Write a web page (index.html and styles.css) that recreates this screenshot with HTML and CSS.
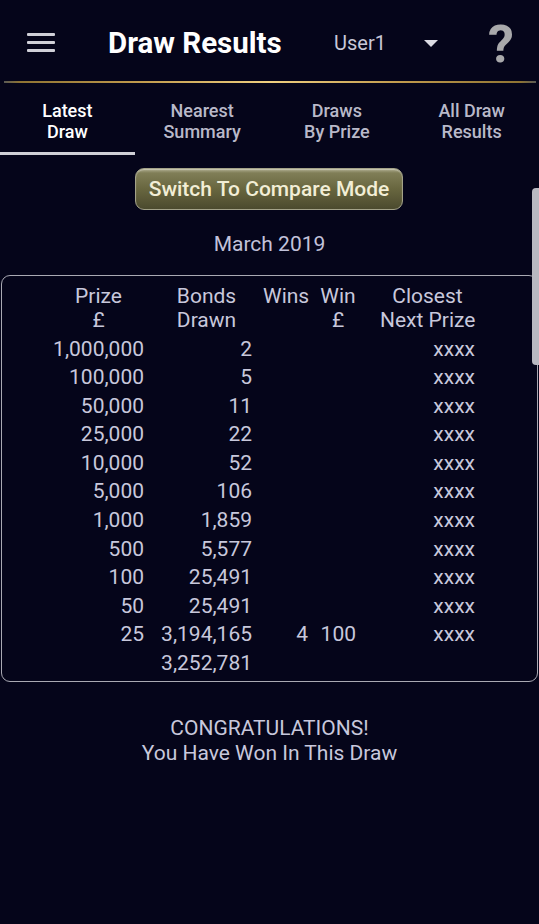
FILE: index.html
```html
<!DOCTYPE html>
<html lang="en">
<head>
<meta charset="utf-8">
<title>Draw Results</title>
<link rel="stylesheet" href="styles.css">
</head>
<body>
<div class="app">
  <header class="topbar">
    <div class="menu" aria-label="Menu">
      <span class="bar"></span><span class="bar"></span><span class="bar"></span>
    </div>
    <h1 class="title">Draw Results</h1>
    <div class="user">User1</div>
    <div class="caret"></div>
    <div class="help">?</div>
  </header>
  <div class="gold-line"></div>

  <nav class="tabs">
    <div class="tab active">Latest<br>Draw</div>
    <div class="tab">Nearest<br>Summary</div>
    <div class="tab">Draws<br>By Prize</div>
    <div class="tab">All Draw<br>Results</div>
  </nav>

  <div class="button-row">
    <button class="compare-btn">Switch To Compare Mode</button>
  </div>

  <div class="month">March 2019</div>

  <section class="results">
    <div class="grid head">
      <div class="c1">Prize<br>£</div>
      <div class="c2">Bonds<br>Drawn</div>
      <div class="c3">Wins<br>&nbsp;</div>
      <div class="c4">Win<br>£</div>
      <div class="c5">Closest<br>Next Prize</div>
    </div>
    <div class="grid body">
      <div>1,000,000</div><div>2</div><div></div><div></div><div>xxxx</div>
      <div>100,000</div><div>5</div><div></div><div></div><div>xxxx</div>
      <div>50,000</div><div>11</div><div></div><div></div><div>xxxx</div>
      <div>25,000</div><div>22</div><div></div><div></div><div>xxxx</div>
      <div>10,000</div><div>52</div><div></div><div></div><div>xxxx</div>
      <div>5,000</div><div>106</div><div></div><div></div><div>xxxx</div>
      <div>1,000</div><div>1,859</div><div></div><div></div><div>xxxx</div>
      <div>500</div><div>5,577</div><div></div><div></div><div>xxxx</div>
      <div>100</div><div>25,491</div><div></div><div></div><div>xxxx</div>
      <div>50</div><div>25,491</div><div></div><div></div><div>xxxx</div>
      <div>25</div><div>3,194,165</div><div>4</div><div>100</div><div>xxxx</div>
      <div></div><div>3,252,781</div><div></div><div></div><div></div>
    </div>
  </section>

  <p class="congrats">CONGRATULATIONS!<br>You Have Won In This Draw</p>

  <div class="scrollbar"></div>
</div>
</body>
</html>
```

FILE: styles.css
```css
* { box-sizing: border-box; }

html, body {
  margin: 0;
  padding: 0;
  background: #05051a;
}

body {
  font-family: Roboto, "Noto Sans", "Liberation Sans", sans-serif;
  color: #c8c8dc;
  width: 539px;
  height: 924px;
  overflow: hidden;
}

.app {
  position: relative;
  height: 924px;
}

/* ---------- top bar ---------- */
.topbar {
  display: flex;
  align-items: center;
  height: 81px;
  padding-top: 4px;
  padding-left: 27px;
}

.menu {
  width: 28px;
  display: flex;
  flex-direction: column;
  gap: 5.5px;
}

.menu .bar {
  display: block;
  height: 2.7px;
  background: #d0d0d8;
  border-radius: 1px;
}

.title {
  margin: 0 0 0 53px;
  width: 226px;
  font-size: 29.5px;
  font-weight: 700;
  color: #ffffff;
  white-space: nowrap;
}

.user {
  width: 90px;
  font-size: 20px;
  color: #c8c8d8;
}

.caret {
  width: 0;
  height: 0;
  border-left: 7.5px solid transparent;
  border-right: 7.5px solid transparent;
  border-top: 7px solid #dcdce4;
  margin-top: 1px;
}

.help {
  margin-left: 50px;
  font-size: 52px;
  font-weight: 700;
  line-height: 1;
  color: #a9a9ab;
  margin-top: 4px;
}

.gold-line {
  height: 2px;
  margin: 0 3px 0 4px;
  background: linear-gradient(to right, #5a5a55 0%, #8f7433 3%, #c09a4c 25%, #f0d080 50%, #c09a4c 75%, #8f7433 97%, #5a5a55 100%);
}

/* ---------- tabs ---------- */
.tabs {
  display: grid;
  grid-template-columns: repeat(4, 1fr);
}

.tab {
  text-align: center;
  font-size: 18px;
  font-weight: 500;
  line-height: 21px;
  color: #b9b9c9;
  padding-top: 16.5px;
  padding-bottom: 10px;
  border-bottom: 3px solid transparent;
}

.tab.active {
  color: #ffffff;
  border-bottom-color: #cfcfd6;
}

/* ---------- button ---------- */
.button-row {
  display: flex;
  justify-content: center;
  margin-top: 13px;
}

.compare-btn {
  width: 268px;
  height: 42px;
  margin-left: -1px;
  border: 1px solid #a3a288;
  border-radius: 9px;
  background: linear-gradient(to bottom, #aeac8e 0%, #807e57 10%, #68663f 50%, #4b4a2e 100%);
  box-shadow: inset 0 1px 1px rgba(255, 255, 255, 0.35);
  font-family: Roboto, "Noto Sans", sans-serif;
  font-size: 21px;
  font-weight: 500;
  color: #f2eed6;
  padding: 0;
  text-align: center;
}

.month {
  margin-top: 22px;
  text-align: center;
  font-size: 21px;
  line-height: 24px;
  color: #c2c2da;
}

/* ---------- results table ---------- */
.results {
  margin: 19px 1px 0 1px;
  border: 1px solid #a9a9b3;
  border-radius: 9px;
  padding: 8px 0 3px 51px;
}

.grid {
  display: grid;
  grid-template-columns: 91px 108px 56px 48px 119px;
  font-size: 21px;
}

.head {
  line-height: 24px;
  margin-bottom: 3px;
}

.head > div {
  text-align: center;
}

.body {
  line-height: 28.6px;
}

.body > div {
  text-align: right;
  white-space: nowrap;
}

.head .c2 { padding-left: 17px; }
.head .c3 { padding-left: 11px; }
.head .c4 { padding-left: 12px; }
.head .c5 { padding-left: 24px; white-space: nowrap; }

/* ---------- congratulations ---------- */
.congrats {
  margin: 34px 0 0 0;
  text-align: center;
  font-size: 21px;
  line-height: 25px;
  color: #c8c8dc;
}

/* overlay scrollbar */
.scrollbar {
  position: absolute;
  right: 0;
  top: 188px;
  width: 7px;
  height: 177px;
  background: #b9b9c1;
  border-radius: 4px 0 0 4px;
}
```
